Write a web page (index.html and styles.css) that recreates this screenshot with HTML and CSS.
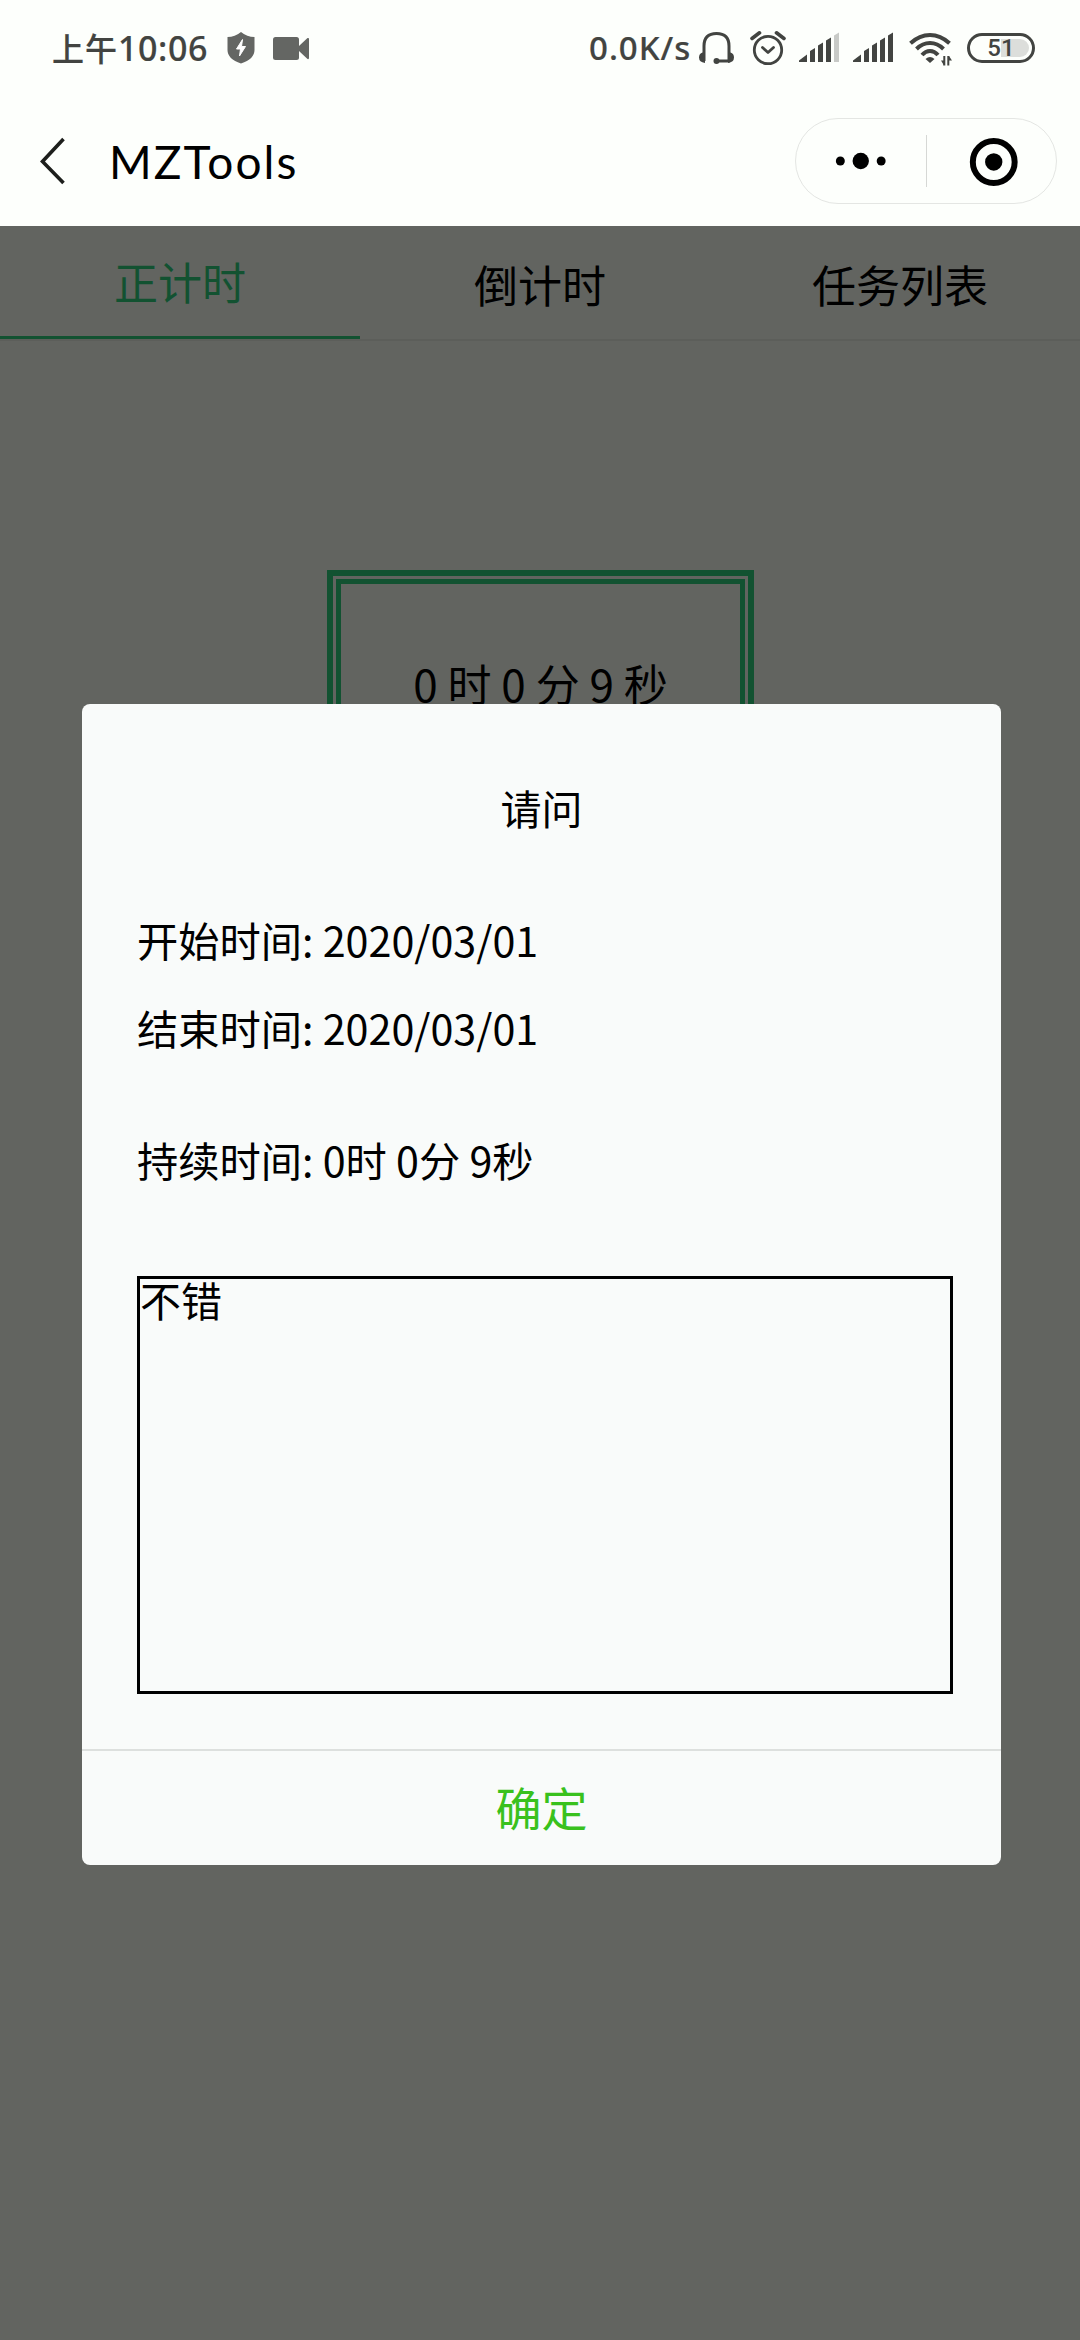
FILE: index.html
```html
<!DOCTYPE html>
<html lang="zh-CN">
<head>
<meta charset="utf-8">
<title>MZTools</title>
<link rel="stylesheet" href="styles.css">
</head>
<body>
<header class="status">
  <span class="clock"><span class="clock-cn">上午</span>10:06</span>
  <svg class="i-shield" width="28" height="40" viewBox="0 0 28 40" fill="#646663"><path d="M14 2Q20 7 27.500 7V20Q27.500 29 14 33.500Q.5 29 .5 20V7Q8 7 14 2Z"/><path d="M15.500 9.500L9.500 19H13.500L12.500 26L18.500 16.500H14.500Z" fill="#fff" stroke="#fff" stroke-linejoin="round"/></svg>
  <svg class="i-cam" width="36" height="40" viewBox="0 0 36 40" fill="#646663"><rect y="7" width="26" height="23" rx="2.500"/><path d="M26 16L34.500 8Q36 7.500 36 9V28Q36 29.500 34.500 29L26 21Z"/></svg>
  <span class="speed">0.0K/s</span>
  <svg class="i-head" width="37" height="40" viewBox="0 0 37 40"><path d="M6 31V16Q6 3.500 18.500 3.500Q31 3.500 31 16V31M32 31H19" fill="none" stroke="#424441" stroke-width="3"/><path d="M7 22.500V33Q1 32 1 27.500Q1 23.500 4.500 22.500ZM30 22.500V33Q36 32 36 27.500Q36 23.500 32.500 22.500Z" fill="#424441"/><circle cx="18.500" cy="31" r="3" fill="#424441"/></svg>
  <svg class="i-alarm" width="36" height="40" viewBox="0 0 36 40" fill="none" stroke="#424441" stroke-width="2.800" stroke-linecap="round" stroke-linejoin="round"><circle cx="18" cy="20" r="13.700"/><path d="M12.500 17.500L18 22.500L23.500 17.500"/><path d="M2 8.500L9.500 2.800M34 8.500L26.500 2.800" stroke-width="3.600"/></svg>
  <svg class="i-sig" width="40" height="40" viewBox="0 0 40 40" fill="#424441"><path d="M0 32V30.500L8 24.500V32ZM11 32V21L16 18V32ZM19 32V15.500L24 12.500V32ZM27 32V10.500L32 7.500V32Z"/><path d="M35 32V5.500L40 2.500V32Z" fill="#c8cac7"/></svg>
  <svg class="i-sig2" width="40" height="40" viewBox="0 0 40 40" fill="#424441"><path d="M0 32V30.500L8 24.500V32ZM11 32V21L16 18V32ZM19 32V15.500L24 12.500V32ZM27 32V10.500L32 7.500V32ZM35 32V5.500L40 2.500V32Z"/></svg>
  <svg class="i-wifi" width="44" height="40" viewBox="0 0 44 40" fill="none" stroke="#424441" stroke-width="4"><path d="M1.500 13.300Q10.500 5 21 5Q31.500 5 40.500 13.300M7.500 19Q13.500 13 21 13Q28.500 13 34.500 19M13 25Q16.500 21 21 21Q25.500 21 29 25"/><path d="M16.500 29Q21 25 25.500 29L21 33Z" fill="#424441" stroke="none"/><path d="M35.300 26V35.500M39.300 26V35.500" stroke-width="2"/><path d="M32 30.500H35V35.500ZM43 30.500H40V26Z" fill="#424441" stroke="none"/></svg>
  <span class="battery">51</span>
</header>
<nav class="nav">
  <svg class="back" width="26" height="48" viewBox="0 0 26 48" fill="none" stroke="#1d1f1c" stroke-width="3.600"><path d="M23.500 2L2.500 24.500L23.500 46"/></svg>
  <h1 class="title">MZTools</h1>
  <div class="capsule">
    <svg class="half" viewBox="0 0 130 86"><circle cx="44.500" cy="43" r="4.500"/><circle cx="65" cy="43" r="8.200"/><circle cx="85.500" cy="43" r="4.500"/></svg>
    <i class="split"></i>
    <svg class="half" viewBox="0 0 130 86"><circle cx="67" cy="44" r="21" fill="none" stroke="#000" stroke-width="6"/><circle cx="67" cy="44" r="8.700"/></svg>
  </div>
</nav>
<main class="page">
  <div class="tabs"><div class="tab active">正计时</div><div class="tab">倒计时</div><div class="tab">任务列表</div></div>
  <div class="timer"><div class="timer-in">0 时 0 分 9 秒</div></div>
  <section class="modal">
    <h2 class="modal-title">请问</h2>
    <div class="modal-body">
      <p class="row">开始时间: 2020/03/01</p>
      <p class="row">结束时间: 2020/03/01</p>
      <p class="row last">持续时间: 0时 0分 9秒</p>
      <div class="note">不错</div>
    </div>
    <div class="confirm">确定</div>
  </section>
</main>
</body>
</html>
```
FILE: styles.css
```css
* { box-sizing: border-box; margin: 0; padding: 0; }
body { width: 1080px; height: 2340px; overflow: hidden; background: #fdfffc; color: #000; font-family: "Noto Sans CJK SC", sans-serif; }
svg { display: block; flex: none; }

.status { display: flex; align-items: flex-start; height: 100px; padding: 30px 0 0 52px; color: #424441; }
.clock { width: 175px; height: 40px; white-space: nowrap; font: 500 34px/36px "Noto Sans", "Noto Sans CJK SC", sans-serif; letter-spacing: 0.600px; -webkit-text-stroke: 0.200px #424441; }
.clock-cn { font-size: 32px; letter-spacing: 1px; }
.i-cam { margin-left: 18px; }
.speed { width: 109px; margin-left: 280px; white-space: nowrap; font: 500 33px/36px "Noto Sans", sans-serif; letter-spacing: 1px; -webkit-text-stroke: 0.200px #424441; }
.i-alarm { margin-left: 15px; }
.i-sig { margin-left: 13px; }
.i-sig2 { margin-left: 14px; }
.i-wifi { margin-left: 16px; }
.battery { width: 68px; height: 30px; margin: 3px 0 0 14px; padding: 3px; overflow: hidden; border: 3px solid #424441; border-radius: 15px; text-align: center; font: 500 24px/19px Roboto, sans-serif; background: linear-gradient(90deg, #fdfffc 50%, #dcdedb 50%) content-box; }

.nav { display: flex; align-items: center; height: 126px; padding: 0 23px 0 40px; }
.back { margin-bottom: 4px; }
.title { flex: 1; margin: 0 0 2px 43px; font: 400 46px/60px Lato, sans-serif; letter-spacing: 2.100px; }
.capsule { display: flex; align-items: center; width: 262px; height: 86px; margin-bottom: 4px; border: 1px solid #e4e6e3; border-radius: 43px; }
.half { flex: 1; width: 129px; height: 86px; }
.split { width: 1px; height: 52px; background: #d6d8d5; }

.page { position: relative; height: 2114px; background: #626460; }
.tabs { display: flex; height: 115px; border-bottom: 2px solid #5c5e5a; }
.tab { flex: 1; height: 113px; padding-top: 26px; text-align: center; font-size: 44px; line-height: 64px; }
.active { padding-top: 23px; color: #125231; border-bottom: 3px solid #125231; }
.timer { width: 427px; height: 427px; margin: 229px 0 0 327px; padding: 3px; border: 6px solid #125231; }
.timer-in { height: 100%; padding-top: 67px; border: 5px solid #125231; text-align: center; font-size: 44px; line-height: 64px; white-space: nowrap; }

.modal { position: absolute; left: 82px; top: 478px; width: 919px; height: 1161px; display: flex; flex-direction: column; border-radius: 8px; background: #f9fbfa; font-size: 41.250px; }
.modal-title { padding-top: 72px; font-size: 41px; font-weight: 400; line-height: 62px; text-align: center; }
.modal-body { flex: 1; padding: 57px 48px 0 55px; }
.row { height: 88px; line-height: 88px; }
.last { margin-top: 44px; }
.note { height: 418px; margin-top: 73px; border: 3px solid #000; font-size: 41px; line-height: 40px; }
.confirm { height: 116px; border-top: 2px solid #dde0de; color: #39c11d; text-align: center; font-size: 46px; line-height: 111px; }
```
